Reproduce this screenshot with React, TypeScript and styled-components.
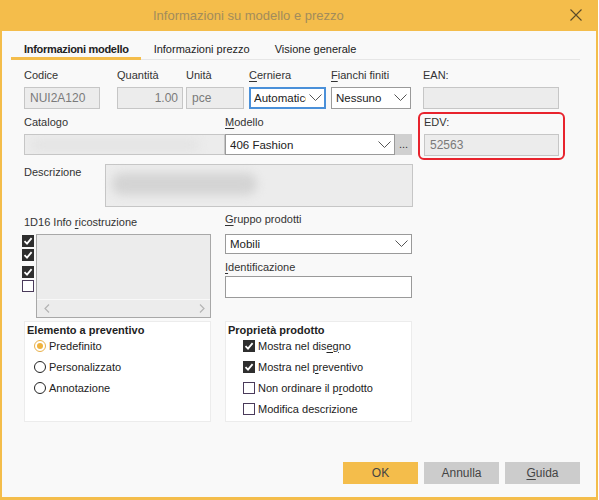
import React from "react";
import styled, { createGlobalStyle } from "styled-components";

const GlobalStyle = createGlobalStyle`
  html, body { margin: 0; padding: 0; background: #ffffff; }
  body { font-family: "Liberation Sans", Arial, sans-serif; font-size: 11px; color: #333333; }
  * { box-sizing: border-box; }
`;

const Chevron = () => (
  <svg width="13" height="8" viewBox="0 0 13 8">
    <polyline points="0.5,0.5 6.5,6.5 12.5,0.5" fill="none" stroke="#555" strokeWidth="1" />
  </svg>
);

const Check = () => (
  <svg width="10" height="10" viewBox="0 0 10 10">
    <polyline points="1.5,5.2 4,7.6 8.6,2.2" fill="none" stroke="#fff" strokeWidth="1.8" />
  </svg>
);

const Arrow = ({ dir }: { dir: "left" | "right" }) => (
  <svg width="6" height="9" viewBox="0 0 6 9">
    <polyline
      points={dir === "left" ? "5,0.5 1,4.5 5,8.5" : "1,0.5 5,4.5 1,8.5"}
      fill="none"
      stroke="#b4b4b4"
      strokeWidth="1.2"
    />
  </svg>
);

export default function App() {
  return (
    <>
      <GlobalStyle />
      <Window>
        <TitleBar>
          <Title>Informazioni su modello e prezzo</Title>
          <CloseBtn>
            <svg width="12" height="12" viewBox="0 0 12 12">
              <path d="M0.5 0.5 L11.5 11.5 M11.5 0.5 L0.5 11.5" stroke="#5a4a2a" strokeWidth="1.1" />
            </svg>
          </CloseBtn>
        </TitleBar>
        <Frame>
          <Tabs>
            <Tab $active>Informazioni modello</Tab>
            <Tab>Informazioni prezzo</Tab>
            <Tab>Visione generale</Tab>
          </Tabs>

          <Content>
            <Row $top={8}>
              <Field $w={76}>
                <Label>Codice</Label>
                <Input $h={22} $disabled>NUI2A120</Input>
              </Field>
              <Field $w={66} $ml={17}>
                <Label>Quantità</Label>
                <Input $h={22} $disabled $right>1.00</Input>
              </Field>
              <Field $w={58} $ml={3}>
                <Label>Unità</Label>
                <Input $h={22} $disabled>pce</Input>
              </Field>
              <Field $w={77} $ml={5}>
                <Label><u>C</u>erniera</Label>
                <Select $h={22} $focused>
                  <SelectText>Automatico</SelectText>
                  <Chevron />
                </Select>
              </Field>
              <Field $w={80} $ml={5}>
                <Label><u>F</u>ianchi finiti</Label>
                <Select $h={22}>
                  <SelectText>Nessuno</SelectText>
                  <Chevron />
                </Select>
              </Field>
              <Field $w={136} $ml={12}>
                <Label>EAN:</Label>
                <Input $h={22} $disabled />
              </Field>
            </Row>

            <Row>
              <Field $w={201} $mt={6}>
                <Label>Catalogo</Label>
                <Input $h={21} $disabled>
                  <Blur $w={170} />
                </Input>
              </Field>
              <Field $w={187} $mt={6}>
                <Label><u>M</u>odello</Label>
                <InlineGroup>
                  <Select $h={21} $grow>
                    <SelectText>406 Fashion</SelectText>
                    <Chevron />
                  </Select>
                  <DotsBtn>...</DotsBtn>
                </InlineGroup>
              </Field>
              <Highlight>
                <Field $w={135}>
                  <Label>EDV:</Label>
                  <Input $h={22} $disabled>52563</Input>
                </Field>
              </Highlight>
            </Row>

            <Row $top={4}>
              <SideLabel>Descrizione</SideLabel>
              <TextArea>
                <Blur $w={145} $dark />
              </TextArea>
            </Row>

            <Row>
              <Column $w={189} $ml={-2}>
                <Label $mt={8} $ml={2}>1D16 Info <u>r</u>icostruzione</Label>
                <ListRow>
                  <CheckStack>
                    <Box $checked $mt={1}><Check /></Box>
                    <Box $checked $mt={2}><Check /></Box>
                    <Box $checked $mt={5}><Check /></Box>
                    <Box $mt={2} />
                  </CheckStack>
                  <ListBox>
                    <ScrollBar>
                      <Arrow dir="left" />
                      <Arrow dir="right" />
                    </ScrollBar>
                  </ListBox>
                </ListRow>
              </Column>
              <Column $w={187} $ml={14}>
                <Label $mt={5}><u>G</u>ruppo prodotti</Label>
                <Select $h={20} $mt={3}>
                  <SelectText>Mobili</SelectText>
                  <Chevron />
                </Select>
                <Label $mt={6}><u>I</u>dentificazione</Label>
                <Input $h={22} $mt={-3} />
              </Column>
            </Row>

            <Row $top={3}>
              <GroupBox>
                <GroupTitle>Elemento a preventivo</GroupTitle>
                <Option>
                  <Radio $checked />
                  <span>Predefinito</span>
                </Option>
                <Option>
                  <Radio />
                  <span>Personalizzato</span>
                </Option>
                <Option>
                  <Radio />
                  <span>Annotazione</span>
                </Option>
              </GroupBox>
              <GroupBox $ml={14}>
                <GroupTitle>Proprietà prodotto</GroupTitle>
                <Option>
                  <Box $checked><Check /></Box>
                  <span>Mostra nel dis<u>eg</u>no</span>
                </Option>
                <Option>
                  <Box $checked><Check /></Box>
                  <span>Mostra nel <u>p</u>reventivo</span>
                </Option>
                <Option>
                  <Box />
                  <span>Non ordinare il p<u>r</u>odotto</span>
                </Option>
                <Option>
                  <Box />
                  <span>Modifica descrizione</span>
                </Option>
              </GroupBox>
            </Row>
          </Content>

          <Footer>
            <Button $primary>OK</Button>
            <Button>Annulla</Button>
            <Button><u>G</u>uida</Button>
          </Footer>
        </Frame>
      </Window>
    </>
  );
}

const Window = styled.div`
  width: 599px;
  height: 500px;
  display: flex;
  flex-direction: column;
  background: #ffffff;
`;

const TitleBar = styled.div`
  height: 31px;
  flex: none;
  background: #f4bd4b;
  display: flex;
  align-items: center;
  padding-left: 153px;
  position: relative;
  margin-right: 1px;
`;

const Title = styled.div`
  font-size: 13px;
  color: #a28c5c;
`;

const CloseBtn = styled.div`
  position: absolute;
  right: 16px;
  top: 9px;
  display: flex;
`;

const Frame = styled.div`
  flex: 1;
  display: flex;
  flex-direction: column;
  background: #f9f9f9;
  border-left: 2px solid #f4bd4b;
  border-right: 2px solid #f4bd4b;
  border-bottom: 3px solid #f4bd4b;
  margin-right: 1px;
  padding: 8px 16px 13px 9px;
`;

const Tabs = styled.div`
  display: flex;
  width: 569px;
  height: 21px;
  border-bottom: 1px solid #e6e6e6;
`;

const Tab = styled.div<{ $active?: boolean }>`
  padding: 4px 12px 0 13px;
  margin-bottom: -1px;
  font-weight: ${(p) => (p.$active ? 700 : 400)};
  letter-spacing: ${(p) => (p.$active ? "-0.3px" : "0")};
  color: #222;
  border-bottom: 3px solid ${(p) => (p.$active ? "#f4bd4b" : "transparent")};
`;

const Content = styled.div`
  display: flex;
  flex-direction: column;
  padding-left: 13px;
`;

const Row = styled.div<{ $top?: number }>`
  display: flex;
  align-items: flex-start;
  margin-top: ${(p) => p.$top ?? 0}px;
`;

const Field = styled.div<{ $w: number; $ml?: number; $mt?: number }>`
  display: flex;
  flex-direction: column;
  width: ${(p) => p.$w}px;
  margin-left: ${(p) => p.$ml ?? 0}px;
  margin-top: ${(p) => p.$mt ?? 0}px;
`;

const Column = styled.div<{ $w: number; $ml?: number }>`
  display: flex;
  flex-direction: column;
  width: ${(p) => p.$w}px;
  margin-left: ${(p) => p.$ml ?? 0}px;
`;

const Label = styled.div<{ $mt?: number; $ml?: number }>`
  height: 14px;
  line-height: 14px;
  margin: ${(p) => p.$mt ?? 0}px 0 5px ${(p) => p.$ml ?? 0}px;
  color: #333;
  white-space: nowrap;
  u { text-decoration-thickness: 1px; text-underline-offset: 2px; }
`;

const SideLabel = styled.div`
  width: 81px;
  padding-top: 1px;
  line-height: 14px;
  color: #333;
`;

const Input = styled.div<{ $h: number; $disabled?: boolean; $right?: boolean; $mt?: number }>`
  height: ${(p) => p.$h}px;
  margin-top: ${(p) => p.$mt ?? 0}px;
  background: ${(p) => (p.$disabled ? "#ececec" : "#ffffff")};
  border: 1px solid ${(p) => (p.$disabled ? "#c6c6c6" : "#9a9a9a")};
  color: #7a7a7a;
  font-size: 12px;
  display: flex;
  align-items: center;
  justify-content: ${(p) => (p.$right ? "flex-end" : "flex-start")};
  padding: 0 4px 0 5px;
  overflow: hidden;
`;

const Select = styled.div<{ $h: number; $focused?: boolean; $grow?: boolean; $mt?: number }>`
  height: ${(p) => p.$h}px;
  margin-top: ${(p) => p.$mt ?? 0}px;
  flex: ${(p) => (p.$grow ? 1 : "none")};
  background: #ffffff;
  border: ${(p) => (p.$focused ? "2px solid #4a90d9" : "1px solid #9a9a9a")};
  display: flex;
  align-items: center;
  padding: 0 ${(p) => (p.$focused ? 2 : 3)}px 0 ${(p) => (p.$focused ? 3 : 4)}px;
  gap: 3px;
  color: #222;
  font-size: 11.5px;
  overflow: hidden;
  svg { flex: none; }
`;

const SelectText = styled.span`
  flex: 1;
  overflow: hidden;
  white-space: nowrap;
`;

const InlineGroup = styled.div`
  display: flex;
`;

const DotsBtn = styled.div`
  width: 17px;
  height: 21px;
  background: #d0d0d0;
  color: #333;
  display: flex;
  align-items: center;
  justify-content: center;
  padding-bottom: 2px;
`;

const Highlight = styled.div`
  margin: 3px 0 0 6px;
  width: 147px;
  height: 48px;
  border: 2px solid #e8232d;
  border-radius: 6px;
  padding: 1px 0 0 4px;
`;

const Blur = styled.div<{ $w: number; $dark?: boolean }>`
  width: ${(p) => p.$w}px;
  height: ${(p) => (p.$dark ? 22 : 12)}px;
  background: ${(p) => (p.$dark ? "#d4d4d4" : "#e4e4e4")};
  border-radius: 10px;
  filter: blur(5px);
`;

const TextArea = styled.div`
  width: 308px;
  height: 43px;
  background: #ececec;
  border: 1px solid #c6c6c6;
  padding: 8px 6px;
`;

const ListRow = styled.div`
  display: flex;
  gap: 2px;
`;

const CheckStack = styled.div`
  display: flex;
  flex-direction: column;
  width: 12px;
`;

const Box = styled.span<{ $checked?: boolean; $mt?: number }>`
  flex: none;
  width: 12px;
  height: 12px;
  margin-top: ${(p) => p.$mt ?? 0}px;
  background: ${(p) => (p.$checked ? "#2e2e2e" : "#ffffff")};
  border: 1px solid ${(p) => (p.$checked ? "#2e2e2e" : "#4a3a5a")};
  display: inline-flex;
  align-items: center;
  justify-content: center;
`;

const ListBox = styled.div`
  width: 175px;
  height: 84px;
  background: #ececec;
  border: 1px solid #a8a8a8;
  display: flex;
  flex-direction: column;
  justify-content: flex-end;
`;

const ScrollBar = styled.div`
  height: 18px;
  border-top: 1px solid #f8f8f8;
  display: flex;
  align-items: center;
  justify-content: space-between;
  padding: 0 5px 0 7px;
`;

const GroupBox = styled.div<{ $ml?: number }>`
  width: 187px;
  height: 101px;
  margin-left: ${(p) => p.$ml ?? 0}px;
  background: #ffffff;
  border: 1px solid #ececec;
  padding: 1px 0 0 2px;
  display: flex;
  flex-direction: column;
`;

const GroupTitle = styled.div`
  font-weight: 700;
  color: #222;
  height: 12px;
  line-height: 14px;
`;

const Option = styled.div`
  height: 21px;
  display: flex;
  align-items: center;
  gap: 3px;
  padding-left: 15px;
  color: #222;
  white-space: nowrap;
  u { text-underline-offset: 2px; }
`;

const Radio = styled.span<{ $checked?: boolean }>`
  flex: none;
  width: 12px;
  height: 12px;
  margin-left: -8px;
  border-radius: 50%;
  border: 1px solid ${(p) => (p.$checked ? "#e8b04a" : "#222")};
  background: #fff;
  display: inline-flex;
  align-items: center;
  justify-content: center;
  &::after {
    content: "";
    width: 6px;
    height: 6px;
    border-radius: 50%;
    background: ${(p) => (p.$checked ? "#efb23e" : "transparent")};
  }
`;

const Footer = styled.div`
  margin-top: auto;
  display: flex;
  justify-content: flex-end;
  gap: 6px;
`;

const Button = styled.div<{ $primary?: boolean }>`
  width: 75px;
  height: 22px;
  background: ${(p) => (p.$primary ? "#f4bd4b" : "#cccccc")};
  color: #444;
  font-size: 12px;
  display: flex;
  align-items: center;
  justify-content: center;
  u { text-underline-offset: 2px; }
`;
